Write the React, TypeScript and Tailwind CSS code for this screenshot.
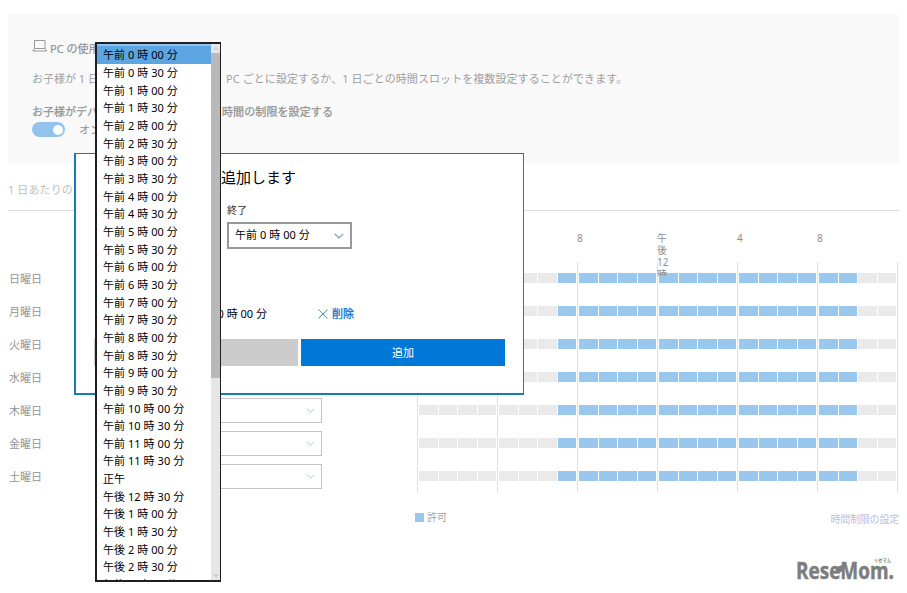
import React from "react";

const DAYS = ["日曜日", "月曜日", "火曜日", "水曜日", "木曜日", "金曜日", "土曜日"];

const HOUR_LABELS = ["", "", "8", "午後12時", "4", "8"];

function buildTimes(): string[] {
  const out: string[] = [];
  for (let i = 0; i < 31; i++) {
    const h = Math.floor(i / 2);
    const m = i % 2 ? "30" : "00";
    if (i === 24) out.push("正午");
    else if (h < 12) out.push(`午前 ${h} 時 ${m} 分`);
    else out.push(`午後 ${h === 12 ? 12 : h - 12} 時 ${m} 分`);
  }
  return out;
}

function Chevron({ className }: { className: string }) {
  return (
    <svg viewBox="0 0 10 6" className={className} fill="none" stroke="currentColor" strokeWidth="1.1">
      <path d="M0.7 0.8 L5 5 L9.3 0.8" />
    </svg>
  );
}

function SettingsPanel() {
  return (
    <section className="ml-2 mt-3.5 h-[149px] w-[891px] bg-[#f9f9f9] pl-6 pt-[25px] text-[#929292]">
      <div className="flex h-5 items-center gap-[2px]">
        <svg viewBox="0 0 16 12" className="-mt-1.5 h-3 w-4 shrink-0" fill="none" stroke="#999" strokeWidth="1">
          <path d="M2.5 0.5 H13 V8.5 H2.5 Z M2.5 8.5 L0.8 11 H15 L13 8.5" />
        </svg>
        <h2 className="text-[11px] [-webkit-text-stroke:0.2px]">PC の使用</h2>
      </div>
      <p className="mt-3 flex h-4 items-center whitespace-nowrap text-[11px] text-[#a0a0a0]">
        <span className="w-[188px]">お子様が 1 日</span>
        <span className="ml-[6px] tracking-[0.08px]">
          PC ごとに設定するか、1 日ごとの時間スロットを複数設定することができます。
        </span>
      </p>
      <p className="mt-[17px] flex h-4 items-center whitespace-nowrap text-[11px] [-webkit-text-stroke:0.25px]">
        <span className="w-[188px]">お子様がデバ</span>
        <span className="ml-[2px] tracking-[0.1px]">時間の制限を設定する</span>
      </p>
      <div className="mt-[2px] flex items-center gap-3.5 text-[11px]">
        <span className="flex h-[15px] w-[33px] items-center justify-end rounded-full bg-[#93c3ec] pr-0.5">
          <span className="size-[10px] rounded-full bg-white" />
        </span>
        <span className="leading-[15px]">オン</span>
      </div>
    </section>
  );
}

function DayRow({ day }: { day: string }) {
  return (
    <div className="flex h-[33px]">
      <div className="flex w-[90px] items-center pl-px pt-0.5 text-[11px] text-[#949494]">{day}</div>
      <div className="mt-1 flex h-[25px] w-[224px] items-center justify-end border border-[#c4c4c4] pr-[6px]">
        <Chevron className="h-[5px] w-[9px] text-[#abc4c6]" />
      </div>
      <div className="ml-[95px] flex">
        {[0, 1, 2, 3, 4, 5].map((g) => (
          <div key={g} className="grid w-20 grid-cols-4 gap-px border-l border-[#e2e2e2] px-px pt-[11px]">
            {[0, 1, 2, 3].map((c) => {
              const hour = g * 4 + c;
              const allowed = hour >= 7 && hour <= 21;
              return <span key={c} className={allowed ? "h-2.5 bg-[#9ac8ec]" : "h-2.5 bg-[#eaeaea]"} />;
            })}
          </div>
        ))}
        <div className="w-px bg-[#e2e2e2]" />
      </div>
    </div>
  );
}

function Schedule() {
  return (
    <section className="ml-2 w-[891px]">
      <div className="flex h-12 items-end border-b border-[#dcdcdc] pb-3 text-[11px] leading-4 tracking-[0.1px] text-[#c0c0c0]">
        1 日あたりの
      </div>
      <div className="flex h-[51px] pl-[409px] pt-[21px] text-[10px] leading-3 text-[#8e8e8e]">
        {HOUR_LABELS.map((t, i) => (
          <div key={i} className="w-20">
            <div className="relative h-[44px] w-[12px] overflow-hidden">{t}</div>
          </div>
        ))}
      </div>
      <div>
        {DAYS.map((d) => (
          <DayRow key={d} day={d} />
        ))}
      </div>
      <div className="flex items-start justify-between pl-[407px] pt-[17px] text-[10px] leading-4">
        <div className="-mt-px flex items-center gap-[3px] text-[#a3a3a3]">
          <span className="size-[9px] bg-[#9ac8ec]" />
          許可
        </div>
        <a className="mt-px whitespace-nowrap tracking-[-0.2px] text-[#b4c1e6]">時間制限の設定</a>
      </div>
    </section>
  );
}

function AddDialog() {
  return (
    <div className="absolute left-[74px] top-[153px] h-[242px] w-[450px] border-b-2 border-l-2 border-r border-t border-[#187ab9] bg-white text-black">
      <h3 className="ml-[145px] mt-[11px] text-[15px] leading-6">追加します</h3>
      <div className="ml-[151px] mt-[13px] text-[10px] leading-4 text-[#333]">終了</div>
      <div className="ml-[151px] mt-1 flex h-[27px] w-[125px] items-center justify-between border-2 border-[#999] pl-[6px] pr-[6px] text-[11px]">
        <span className="tracking-[0.05px]">午前 0 時 00 分</span>
        <Chevron className="h-[6px] w-[10px] text-[#5f9fc0]" />
      </div>
      <div className="mt-[57px] flex h-4 items-center text-[11px]">
        <span className="ml-[101px] w-[90px] whitespace-nowrap text-right">午前 0 時 00 分</span>
        <svg viewBox="0 0 10 10" className="ml-[51px] size-[10px]" stroke="#4a93c4" strokeWidth="1" fill="none">
          <path d="M0.5 0.5 L9.5 9.5 M9.5 0.5 L0.5 9.5" />
        </svg>
        <span className="ml-1 text-[#2379cb] [-webkit-text-stroke:0.35px]">削除</span>
      </div>
      <div className="ml-[18px] mt-[17px] flex gap-[3px] text-[11px]">
        <div className="h-[27px] w-[204px] bg-[#ccc]" />
        <button className="h-[27px] w-[204px] bg-[#0078d7] pt-0.5 text-white">追加</button>
      </div>
    </div>
  );
}

function TimeList() {
  return (
    <div className="absolute left-[95px] top-[42px] flex h-[540px] w-[126px] overflow-hidden border-b-2 border-l-2 border-r border-t-2 border-[#1f1f22] bg-white">
      <ul className="flex-1 border-t-2 border-[#8fc3ee] bg-[linear-gradient(#5ba5e3_1px,transparent_1px)] pt-[0.4px] text-[11px] leading-[17.67px] tracking-[0.05px] text-black">
        {buildTimes().map((t, i) => (
          <li
            key={t}
            className={
              i === 0
                ? "h-[17.67px] whitespace-nowrap bg-[#5ba5e3] pl-[6px]"
                : "h-[17.67px] whitespace-nowrap pl-[6px]"
            }
          >
            {t}
          </li>
        ))}
      </ul>
      <div className="flex h-full w-[9px] shrink-0 flex-col items-center bg-[#e6e6e6]">
        <Chevron className="my-[3px] h-[3px] w-[6px] rotate-180 text-[#999]" />
        <div className="h-[325px] w-full bg-[#b9b9b9]" />
        <Chevron className="mb-[3px] mt-auto h-[3px] w-[6px] text-[#777]" />
      </div>
    </div>
  );
}

function Logo() {
  return (
    <svg viewBox="0 0 100 26" className="absolute left-[796px] top-[557px] h-[26px] w-[100px] overflow-visible" fill="#7d7d7d">
      <text
        x="0"
        y="22"
        textLength="98"
        lengthAdjust="spacingAndGlyphs"
        fontFamily="'Open Sans', sans-serif"
        fontWeight="700"
        fontSize="23"
        stroke="#7d7d7d"
        strokeWidth="0.5"
      >
        ReseMom.
      </text>
      <path d="M39.5 16 C38.5 11.5 42 8.5 48 8 C48.8 12.5 46 16 39.5 16 Z" />
      <text x="78" y="5" fontSize="4.2" fontWeight="700" textLength="17" fontFamily="'Noto Sans CJK JP', sans-serif">
        リセマム
      </text>
    </svg>
  );
}

export default function App() {
  return (
    <main className="relative flex h-[593px] w-[907px] flex-col overflow-hidden bg-white font-['Noto_Sans','Noto_Sans_CJK_JP',sans-serif]">
      <SettingsPanel />
      <Schedule />
      <AddDialog />
      <TimeList />
      <Logo />
    </main>
  );
}
